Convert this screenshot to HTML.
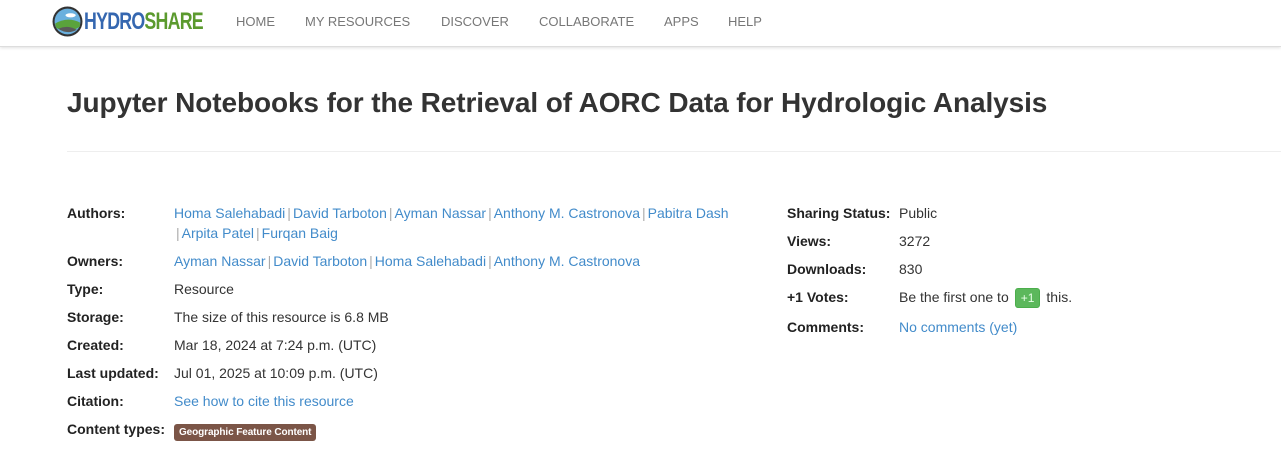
<!DOCTYPE html>
<html><head><meta charset="utf-8"><style>
body{margin:0;width:1281px;height:475px;background:#fff;font-family:"Liberation Sans",sans-serif;color:#333;position:relative;overflow:hidden}
.nav{position:absolute;left:0;top:0;width:1281px;height:46px;background:#fff;border-bottom:1px solid #ddd;box-shadow:0 1px 3px rgba(0,0,0,.12)}
.nav a{position:absolute;top:14px;font-size:13px;color:#777;text-decoration:none}
.logo{position:absolute;left:52px;top:6px}
.brand{position:absolute;left:84px;top:8px;font-size:24px;font-weight:bold;letter-spacing:-1px;transform:scaleX(0.74);transform-origin:left}
h1{position:absolute;left:67px;top:87px;margin:0;font-size:28px;font-weight:bold;color:#333;white-space:nowrap;letter-spacing:-0.1px}
.hr{position:absolute;left:67px;top:151px;width:1214px;height:1px;background:#eee}
.l{position:absolute;font-size:14px;font-weight:bold;color:#222}
.v{position:absolute;font-size:14px;color:#333;white-space:nowrap}
.v a{color:#428bca;text-decoration:none}
.sep{color:#aaa;margin:0 2px}
.badge{display:inline-block;background:#7b5547;color:#fff;font-size:10px;font-weight:bold;padding:3px 5px;border-radius:3px;letter-spacing:-0.1px}
.p1{display:inline-block;background:#5cb85c;border:1px solid #4cae4c;color:#e8ffe8;font-size:12px;padding:2px 5px;border-radius:3px;margin:0 6px}
</style></head><body>
<div class="nav">
<svg class="logo" width="31" height="31" viewBox="0 0 30 30"><circle cx="15" cy="15" r="14.5" fill="#333"/><circle cx="15" cy="15" r="12.5" fill="#6ab0de"/><path d="M3 17 Q15 10 27 16 L27 20 Q15 28 4 21Z" fill="#5aa33c"/><path d="M6 22 Q15 18 24 23 Q15 28 6 22Z" fill="#5a5a5a"/><ellipse cx="18" cy="9" rx="5" ry="2" fill="#fff"/></svg>
<div class="brand"><span style="color:#3567b0">HYDRO</span><span style="color:#5b9a2e">SHARE</span></div>
<a style="left:236px">HOME</a><a style="left:305px">MY RESOURCES</a><a style="left:441px">DISCOVER</a><a style="left:539px">COLLABORATE</a><a style="left:664px">APPS</a><a style="left:728px">HELP</a>
</div>
<h1>Jupyter Notebooks for the Retrieval of AORC Data for Hydrologic Analysis</h1>
<div class="hr"></div>
<div class="l" style="left:67px;top:205px">Authors:</div>
<div class="v" style="left:174px;top:205px"><a>Homa Salehabadi</a><span class="sep">|</span><a>David Tarboton</a><span class="sep">|</span><a>Ayman Nassar</a><span class="sep">|</span><a>Anthony M. Castronova</a><span class="sep">|</span><a>Pabitra Dash</a></div>
<div class="v" style="left:174px;top:225px"><span class="sep">|</span><a>Arpita Patel</a><span class="sep">|</span><a>Furqan Baig</a></div>
<div class="l" style="left:67px;top:253px">Owners:</div>
<div class="v" style="left:174px;top:253px"><a>Ayman Nassar</a><span class="sep">|</span><a>David Tarboton</a><span class="sep">|</span><a>Homa Salehabadi</a><span class="sep">|</span><a>Anthony M. Castronova</a></div>
<div class="l" style="left:67px;top:281px">Type:</div><div class="v" style="left:174px;top:281px">Resource</div>
<div class="l" style="left:67px;top:309px">Storage:</div><div class="v" style="left:174px;top:309px">The size of this resource is 6.8 MB</div>
<div class="l" style="left:67px;top:337px">Created:</div><div class="v" style="left:174px;top:337px">Mar 18, 2024 at 7:24 p.m. (UTC)</div>
<div class="l" style="left:67px;top:365px">Last updated:</div><div class="v" style="left:174px;top:365px">Jul 01, 2025 at 10:09 p.m. (UTC)</div>
<div class="l" style="left:67px;top:393px">Citation:</div><div class="v" style="left:174px;top:393px"><a>See how to cite this resource</a></div>
<div class="l" style="left:67px;top:421px">Content types:</div><div class="v" style="left:174px;top:422px"><span class="badge">Geographic Feature Content</span></div>
<div class="l" style="left:787px;top:205px">Sharing Status:</div><div class="v" style="left:899px;top:205px">Public</div>
<div class="l" style="left:787px;top:233px">Views:</div><div class="v" style="left:899px;top:233px">3272</div>
<div class="l" style="left:787px;top:261px">Downloads:</div><div class="v" style="left:899px;top:261px">830</div>
<div class="l" style="left:787px;top:289px">+1 Votes:</div><div class="v" style="left:899px;top:288px">Be the first one to<span class="p1">+1</span>this.</div>
<div class="l" style="left:787px;top:319px">Comments:</div><div class="v" style="left:899px;top:319px"><a>No comments (yet)</a></div>
</body></html>
